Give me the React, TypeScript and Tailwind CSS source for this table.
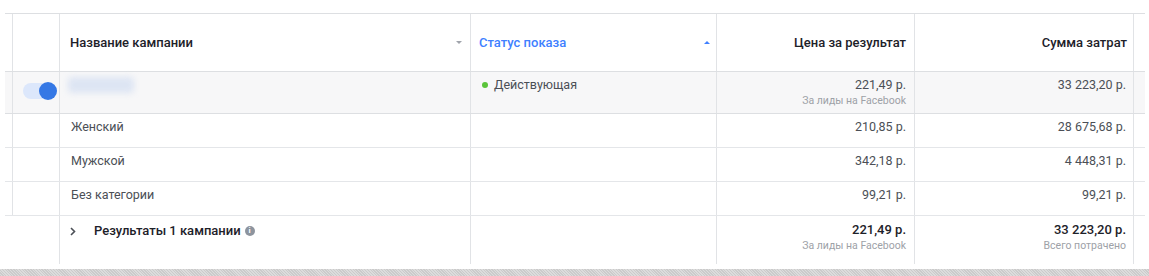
import React from "react";

type Row = {
  name: string;
  price: string;
  total: string;
};

const ROWS: Row[] = [
  { name: "Женский", price: "210,85 р.", total: "28 675,68 р." },
  { name: "Мужской", price: "342,18 р.", total: "4 448,31 р." },
  { name: "Без категории", price: "99,21 р.", total: "99,21 р." },
];

const cell = "border-r border-[#e1e3e6]";

function Toggle() {
  return (
    <div className="relative mt-[10px] ml-[10px] h-[18px] w-[34px]">
      <div className="absolute left-0 top-[1px] h-[16px] w-[30px] rounded-full bg-[#dce7fb]" />
      <div className="absolute right-0 top-0 h-[18px] w-[18px] rounded-full bg-[#3578e5]" />
    </div>
  );
}

function InfoIcon() {
  return (
    <span className="ml-[4px] inline-flex h-[10px] w-[10px] items-center justify-center rounded-full bg-[#8d949e] text-[8px] font-bold leading-none text-white">
      i
    </span>
  );
}

export default function App() {
  return (
    <div
      className="h-[276px] w-full overflow-hidden bg-white pt-[13px] text-[12.5px] text-[#4b4f56]"
      style={{ fontFamily: "Roboto, 'Liberation Sans', sans-serif" }}
    >
      <div className="ml-[5px] w-[1140px]">
        {/* header */}
        <div className="flex h-[59px] border-y border-[#dddfe2] text-[13px]">
          <div className={`w-[8px] ${cell}`} />
          <div className={`w-[47px] ${cell}`} />
          <div className={`flex w-[411px] items-center justify-between pl-[10px] pr-[8px] ${cell}`}>
            <span className="font-medium text-[#1d2129]">Название кампании</span>
            <span className="h-0 w-0 border-x-[3px] border-t-[3px] border-x-transparent border-t-[#a0a4ab]" />
          </div>
          <div className={`flex w-[246px] items-center justify-between pl-[8px] pr-[6px] ${cell}`}>
            <span className="font-medium text-[#4080ff]">Статус показа</span>
            <span className="h-0 w-0 border-x-[3px] border-b-[3px] border-x-transparent border-b-[#4080ff]" />
          </div>
          <div className={`flex w-[198px] items-center justify-end pr-[8px] ${cell}`}>
            <span className="font-medium text-[#1d2129]">Цена за результат</span>
          </div>
          <div className={`flex w-[219px] items-center justify-end pr-[6px] ${cell}`}>
            <span className="font-medium text-[#1d2129]">Сумма затрат</span>
          </div>
          <div className="w-[11px]" />
        </div>

        {/* campaign row */}
        <div className="flex h-[42px] border-b border-[#dddfe2] bg-[#f7f7f8]">
          <div className={`w-[8px] ${cell}`} />
          <div className={`w-[47px] ${cell}`}>
            <Toggle />
          </div>
          <div className={`w-[411px] pl-[8px] pt-[5px] ${cell}`}>
            <div className="h-[16px] w-[66px] rounded-[4px] bg-[#dde5f3] blur-[3px]" />
          </div>
          <div className={`flex w-[246px] items-start pl-[11px] pt-[6px] ${cell}`}>
            <span className="mt-[4px] mr-[6px] h-[6px] w-[6px] rounded-full bg-[#5ac43a]" />
            <span className="leading-[14px]">Действующая</span>
          </div>
          <div className={`flex w-[198px] flex-col items-end pr-[8px] pt-[6px] ${cell}`}>
            <span className="leading-[14px]">221,49 р.</span>
            <span className="mt-[3px] text-[10.5px] leading-[12px] text-[#9da1a7]">За лиды на Facebook</span>
          </div>
          <div className={`flex w-[219px] flex-col items-end pr-[7px] pt-[6px] ${cell}`}>
            <span className="leading-[14px]">33 223,20 р.</span>
          </div>
          <div className="w-[11px]" />
        </div>

        {/* breakdown rows */}
        {ROWS.map((r) => (
          <div key={r.name} className="flex h-[34px] border-b border-[#e4e6e9]">
            <div className={`w-[8px] ${cell}`} />
            <div className={`w-[47px] ${cell}`} />
            <div className={`w-[411px] pl-[11px] pt-[6px] leading-[14px] ${cell}`}>{r.name}</div>
            <div className={`w-[246px] ${cell}`} />
            <div className={`w-[198px] pr-[8px] pt-[6px] text-right leading-[14px] ${cell}`}>{r.price}</div>
            <div className={`w-[219px] pr-[7px] pt-[6px] text-right leading-[14px] ${cell}`}>{r.total}</div>
            <div className="w-[11px]" />
          </div>
        ))}

        {/* totals row */}
        <div className="flex h-[48px]">
          <div className="w-[8px]" />
          <div className={`w-[47px] ${cell}`} />
          <div className={`flex w-[411px] items-start pl-[10px] pt-[8px] ${cell}`}>
            <svg width="6" height="9" viewBox="0 0 6 9" className="mt-[3px]">
              <path d="M1 1l3.5 3.5L1 8" fill="none" stroke="#4b4f56" strokeWidth="1.6" />
            </svg>
            <span className="ml-[18px] flex items-center text-[13px] font-medium leading-[14px] text-[#1d2129]">
              Результаты 1 кампании
              <InfoIcon />
            </span>
          </div>
          <div className={`w-[246px] ${cell}`} />
          <div className={`flex w-[198px] flex-col items-end pr-[8px] pt-[7px] ${cell}`}>
            <span className="text-[13px] font-medium leading-[14px] text-[#1d2129]">221,49 р.</span>
            <span className="mt-[3px] text-[10.5px] leading-[12px] text-[#9da1a7]">За лиды на Facebook</span>
          </div>
          <div className={`flex w-[219px] flex-col items-end pr-[7px] pt-[7px] ${cell}`}>
            <span className="text-[13px] font-medium leading-[14px] text-[#1d2129]">33 223,20 р.</span>
            <span className="mt-[3px] text-[10.5px] leading-[12px] text-[#9da1a7]">Всего потрачено</span>
          </div>
          <div className="w-[11px]" />
        </div>
      </div>

      {/* bottom band */}
      <div className="mt-[5px] h-[10px] w-full bg-[repeating-linear-gradient(45deg,#cbcbcb_0px,#cbcbcb_1px,#dcdcdc_1px,#dcdcdc_2px)]" />
    </div>
  );
}
